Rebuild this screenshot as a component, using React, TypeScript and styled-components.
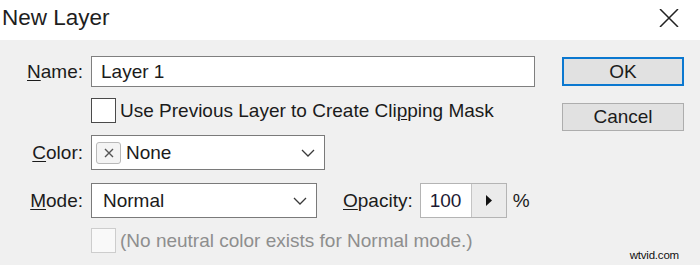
import React from "react";
import styled, { createGlobalStyle } from "styled-components";

const Global = createGlobalStyle`
  html, body { margin: 0; padding: 0; background: #f0f0f0; }
  body { font-family: "Liberation Sans", Arial, sans-serif; color: #1b1b1b; }
  * { box-sizing: border-box; }
`;

const Dialog = styled.div`
  width: 700px;
  height: 265px;
  display: flex;
  flex-direction: column;
  background: #f0f0f0;
  overflow: hidden;
`;

const TitleBar = styled.div`
  height: 40px;
  background: #ffffff;
  display: flex;
  align-items: center;
  justify-content: space-between;
  padding: 0 21px 4px 2px;
`;

const Title = styled.div`
  font-size: 22.5px;
  color: #1e1e1e;
`;

const Close = styled.svg`
  width: 20px;
  height: 18px;
  display: block;
`;

const Body = styled.div`
  flex: 1;
  display: flex;
  padding: 16px 16px 0 0;
`;

const Form = styled.div`
  display: grid;
  grid-template-columns: 83px auto;
  column-gap: 8px;
  align-items: center;
  align-content: start;
`;

const Label = styled.div<{ $mt?: number }>`
  font-size: 19px;
  text-align: right;
  margin-top: ${(p) => p.$mt ?? 0}px;
  white-space: nowrap;
`;

const Cell = styled.div<{ $mt?: number }>`
  display: flex;
  align-items: center;
  margin-top: ${(p) => p.$mt ?? 0}px;
`;

const Mn = styled.span`
  text-decoration: underline;
  text-underline-offset: 2px;
  text-decoration-thickness: 1px;
`;

const TextInput = styled.div`
  width: 444px;
  height: 31px;
  background: #fff;
  border: 1px solid #7f7f7f;
  padding-left: 9px;
  display: flex;
  align-items: center;
  font-size: 19px;
`;

const Check = styled.div<{ $disabled?: boolean }>`
  width: 25px;
  height: 25px;
  background: ${(p) => (p.$disabled ? "#f9f9f9" : "#fff")};
  border: 1px solid ${(p) => (p.$disabled ? "#cdcdcd" : "#4a4a4a")};
  flex: none;
`;

const CheckText = styled.span<{ $disabled?: boolean }>`
  margin-left: 4px;
  font-size: 19px;
  white-space: nowrap;
  color: ${(p) => (p.$disabled ? "#8e8e8e" : "#1b1b1b")};
`;

const Select = styled.div<{ $w: number; $h: number; $pl: number }>`
  width: ${(p) => p.$w}px;
  height: ${(p) => p.$h}px;
  background: #fff;
  border: 1px solid #7a7a7a;
  display: flex;
  align-items: center;
  padding: 0 9px 0 ${(p) => p.$pl}px;
  font-size: 19px;
`;

const SelectText = styled.span`
  flex: 1;
`;

const Swatch = styled.div`
  width: 25px;
  height: 22px;
  border: 1px solid #b9b9b9;
  border-radius: 3px;
  background: #f4f4f4;
  display: flex;
  align-items: center;
  justify-content: center;
  margin-right: 5px;
`;

const Chevron = () => (
  <svg width="14" height="8" viewBox="0 0 14 8">
    <path d="M1 1 L7 7 L13 1" fill="none" stroke="#3a3a3a" strokeWidth="1.3" />
  </svg>
);

const OpacityLabel = styled.span`
  margin-left: 26px;
  font-size: 19px;
`;

const Spin = styled.div`
  margin-left: 7px;
  display: flex;
  height: 35px;
  border: 1px solid #b4b4b4;
`;

const SpinValue = styled.div`
  width: 50px;
  background: #fff;
  display: flex;
  align-items: center;
  padding-left: 9px;
  font-size: 19px;
  color: #1d1a33;
`;

const SpinButton = styled.div`
  width: 35px;
  background: #ebebeb;
  border-left: 1px solid #c4c4c4;
  display: flex;
  align-items: center;
  justify-content: center;
`;

const Percent = styled.span`
  margin-left: 6px;
  font-size: 19px;
`;

const Side = styled.div`
  margin-left: auto;
  display: flex;
  flex-direction: column;
  align-items: center;
`;

const Button = styled.div<{ $primary?: boolean }>`
  width: 122px;
  height: ${(p) => (p.$primary ? 29 : 28)}px;
  background: #e1e1e1;
  border: ${(p) => (p.$primary ? "2px solid #0b78d0" : "1px solid #adadad")};
  display: flex;
  align-items: center;
  justify-content: center;
  font-size: 19px;
  color: #1b1b1b;
  margin-top: ${(p) => (p.$primary ? 1 : 17)}px;
`;

const Watermark = styled.div`
  margin-top: auto;
  margin-bottom: 3px;
  font-size: 11.5px;
  line-height: 13px;
  letter-spacing: -0.2px;
  color: #111;
  align-self: flex-end;
  margin-right: 5px;
`;

export default function App() {
  return (
    <>
      <Global />
      <Dialog>
        <TitleBar>
          <Title>New Layer</Title>
          <Close viewBox="0 0 20 18">
            <path d="M1 0 L19 18 M19 0 L1 18" stroke="#222" strokeWidth="1.5" fill="none" />
          </Close>
        </TitleBar>
        <Body>
          <Form>
            <Label>
              <Mn>N</Mn>ame:
            </Label>
            <Cell>
              <TextInput>Layer 1</TextInput>
            </Cell>

            <div />
            <Cell $mt={11}>
              <Check />
              <CheckText>
                Use Previous Layer to Create Cli<Mn>p</Mn>ping Mask
              </CheckText>
            </Cell>

            <Label $mt={12}>
              <Mn>C</Mn>olor:
            </Label>
            <Cell $mt={12}>
              <Select $w={234} $h={35} $pl={4}>
                <Swatch>
                  <svg width="10" height="10" viewBox="0 0 10 10">
                    <path d="M1 1 L9 9 M9 1 L1 9" stroke="#555" strokeWidth="1.4" />
                  </svg>
                </Swatch>
                <SelectText>None</SelectText>
                <Chevron />
              </Select>
            </Cell>

            <Label $mt={13}>
              <Mn>M</Mn>ode:
            </Label>
            <Cell $mt={13}>
              <Select $w={226} $h={35} $pl={11}>
                <SelectText>Normal</SelectText>
                <Chevron />
              </Select>
              <OpacityLabel>
                <Mn>O</Mn>pacity:
              </OpacityLabel>
              <Spin>
                <SpinValue>100</SpinValue>
                <SpinButton>
                  <svg width="8" height="11" viewBox="0 0 8 11">
                    <path d="M1 0 L7 5.5 L1 11 Z" fill="#111" />
                  </svg>
                </SpinButton>
              </Spin>
              <Percent>%</Percent>
            </Cell>

            <div />
            <Cell $mt={10}>
              <Check $disabled />
              <CheckText $disabled>(No neutral color exists for Normal mode.)</CheckText>
            </Cell>
          </Form>
          <Side>
            <Button $primary>OK</Button>
            <Button>Cancel</Button>
            <Watermark>wtvid.com</Watermark>
          </Side>
        </Body>
      </Dialog>
    </>
  );
}
